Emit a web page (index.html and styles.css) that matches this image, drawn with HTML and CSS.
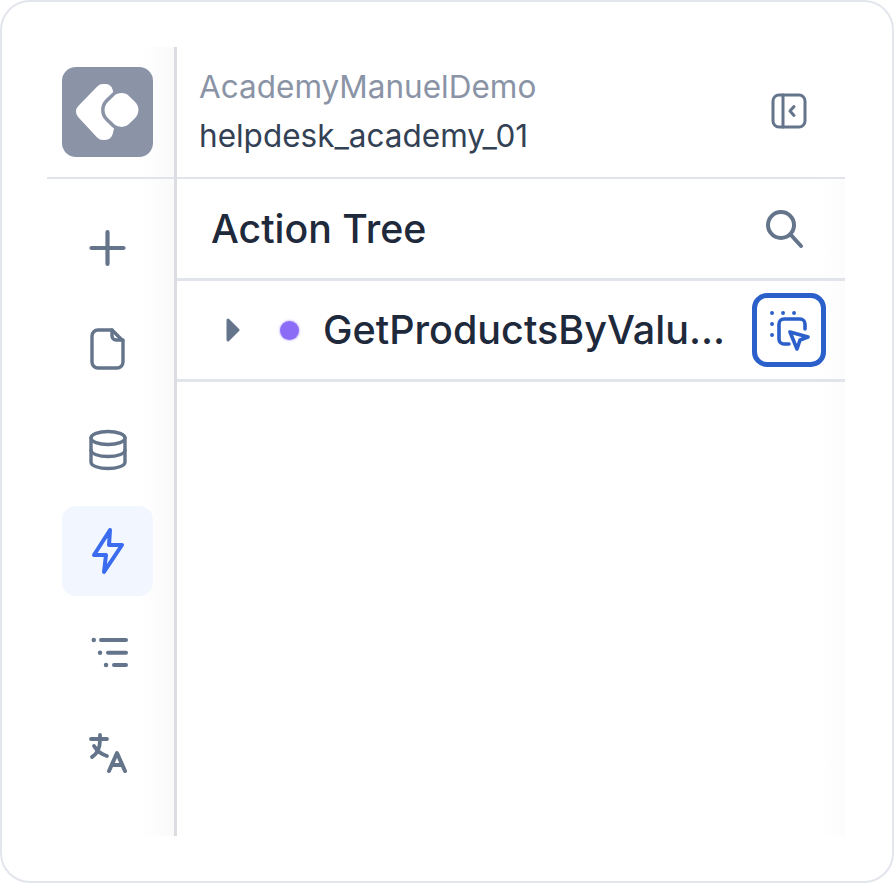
FILE: index.html
```html
<!doctype html>
<html lang="en">
  <head>
    <meta charset="UTF-8" />
    <meta name="viewport" content="width=device-width, initial-scale=1.0" />
    <title>Action Tree</title>
    <link rel="stylesheet" href="styles.css">
  </head>
  <body>
    <div class="card">
      <div class="panel">
        <aside class="rail">
          <div class="rail-top">
            <div class="logo">
              <svg width="91" height="90" viewBox="0 0 91 90">
                <path d="M22 44.500 L41 25 H43 L48 44 L43 65 H41 Z" fill="#fff" stroke="#fff" stroke-width="16" stroke-linejoin="round" />
                <rect x="42.500" y="26" width="34" height="34" rx="13" transform="rotate(45 59.500 43)" fill="#fff" stroke="#8a94a6" stroke-width="3.500" />
              </svg>
            </div>
          </div>
          <nav class="rail-nav">
            <a class="rail-item">
              <svg width="40" height="40" viewBox="0 0 40 40" class="icon">
                <path d="M19.500 4 V36 M3.500 20 H35.500" stroke-width="4.200" />
              </svg>
            </a>
            <a class="rail-item">
              <svg width="40" height="44" viewBox="0 0 40 44" class="icon">
                <path d="M24 3 H10 A6 6 0 0 0 4 9 V35 A6 6 0 0 0 10 41 H29 A6 6 0 0 0 35 35 V14 Z" stroke-width="3.400" />
                <path d="M24 3 V9 A4 4 0 0 0 28 13 H35" stroke-width="3.400" />
              </svg>
            </a>
            <a class="rail-item">
              <svg width="40" height="42" viewBox="0 0 40 42" class="icon">
                <ellipse cx="20" cy="9" rx="17" ry="6.500" stroke-width="3.400" />
                <path d="M3 9 V33 C3 37 11 39.500 20 39.500 C29 39.500 37 37 37 33 V9" stroke-width="3.400" />
                <path d="M3 21 C3 25 11 27.500 20 27.500 C29 27.500 37 25 37 21" stroke-width="3.400" />
              </svg>
            </a>
            <a class="rail-item active">
              <svg width="34" height="48" viewBox="0 0 34 48" class="icon">
                <path d="M19 3 L3 28 H15 L13 45 L31 18 H18 Z" stroke-width="4" />
              </svg>
            </a>
            <a class="rail-item">
              <svg width="40" height="34" viewBox="0 0 40 34" class="icon">
                <path d="M5.700 5 H5.800 M12 17.700 H12.100 M18 30 H18.100" stroke-width="4.400" />
                <path d="M13 5 H38 M20 17.700 H38 M26 30 H38" stroke-width="4" />
              </svg>
            </a>
            <a class="rail-item">
              <svg width="38" height="40" viewBox="0 0 38 40" class="icon">
                <path d="M2 6 H18 M11 2 V7 C11 15 8 21 3 24 M5 13 C8 18 12 21 18 23" stroke-width="3.800" />
                <path d="M20 38 L28 20 L36 38 M23 32 H33" stroke-width="4" />
              </svg>
            </a>
          </nav>
        </aside>
        <main class="content">
          <header class="app-head">
            <div class="app-names">
              <p class="app-org">AcademyManuelDemo</p>
              <p class="app-name">helpdesk_academy_01</p>
            </div>
            <svg width="36" height="36" viewBox="0 0 36 36" class="icon">
              <rect x="2" y="2" width="32" height="32" rx="6" stroke-width="3" />
              <path d="M12 2 V34" stroke-width="3" />
              <path d="M23 13.500 L19 18 L23 22.500" stroke-width="3" />
            </svg>
          </header>
          <div class="tree-head">
            <h2>Action Tree</h2>
            <svg width="40" height="40" viewBox="0 0 40 40" class="icon">
              <circle cx="17" cy="16" r="13" stroke-width="4" />
              <path d="M27 26 L37 37" stroke-width="4" />
            </svg>
          </div>
          <div class="tree-row">
            <svg width="14" height="24" viewBox="0 0 14 24" class="caret">
              <path d="M2 2 L12 12 L2 22 Z" />
            </svg>
            <span class="dot"></span>
            <span class="action-name">GetProductsByValu...</span>
            <button class="select-btn">
              <svg width="42" height="42" viewBox="0 0 42 42" class="icon-blue">
                <path d="M4 4 H4.100 M15 4 H15.100 M26 4 H26.100 M4 15 H4.100 M4 26 H4.100" stroke-width="3.800" />
                <path d="M21 35 H16 A5 5 0 0 1 11 30 V15 A5 5 0 0 1 16 10 H32 A5 5 0 0 1 37 15 V20" stroke-width="3.600" />
                <path d="M22 23 L40 28 L32 31 L29 40 Z" stroke-width="3.600" />
              </svg>
            </button>
          </div>
          <div class="tree-body"></div>
        </main>
      </div>
    </div>
  </body>
</html>
```

FILE: styles.css
```css
:root {
  --line: #e2e4ec;
  --icon: #64748b;
  --text-dark: #1e293b;
  --text-light: #8a94a6;
  --blue: #2b5fc9;
  --edge-fade: linear-gradient(to right, white 96%, #fcfcfc 100%);
}

* {
  box-sizing: border-box;
  margin: 0;
  padding: 0;
}

body {
  width: 894px;
  height: 883px;
  font-family: Inter, "Liberation Sans", sans-serif;
  background-color: white;
  overflow: hidden;
}

.card {
  width: 894px;
  height: 883px;
  padding: 45px 47px 45px 45px;
  background-color: white;
  border: 2px solid #e2e5ec;
  border-radius: 30px;
}

.panel {
  display: flex;
  height: 789px;
}

/* left rail */
.rail {
  width: 130px;
  flex-shrink: 0;
  border-right: 3px solid #dcdde3;
  background: linear-gradient(to right, white 72%, #fafafa 100%);
}

.rail-top {
  height: 132px;
  padding: 20px 0 0 15px;
  border-bottom: 2px solid var(--line);
}

.logo {
  width: 91px;
  height: 90px;
  border-radius: 14px;
  background-color: #8a94a6;
}

.logo svg {
  display: block;
}

.rail-nav {
  display: flex;
  flex-direction: column;
  gap: 11px;
  padding: 24px 0 0 15px;
}

.rail-item {
  display: flex;
  align-items: center;
  justify-content: center;
  width: 91px;
  height: 90px;
  border-radius: 14px;
}

.rail-item.active {
  background-color: #f2f6ff;
}

.rail-item.active .icon {
  stroke: #3b6cf0;
}

.icon,
.icon-blue {
  fill: none;
  stroke: var(--icon);
  stroke-linecap: round;
  stroke-linejoin: round;
  flex-shrink: 0;
}

.icon-blue {
  stroke: var(--blue);
}

/* right side */
.content {
  display: flex;
  flex-direction: column;
  flex: 1;
  min-width: 0;
}

.app-head {
  display: flex;
  align-items: center;
  justify-content: space-between;
  height: 132px;
  padding: 0 38px 3px 22px;
  border-bottom: 2px solid var(--line);
}

.app-org {
  font-size: 31.500px;
  line-height: 49px;
  color: var(--text-light);
}

.app-name {
  font-size: 31.500px;
  line-height: 49px;
  color: #334155;
}

.tree-head {
  display: flex;
  align-items: center;
  justify-content: space-between;
  height: 102px;
  padding: 0 41px 0 34px;
  border-bottom: 3px solid var(--line);
  background: var(--edge-fade);
}

.tree-head h2 {
  font-size: 39.300px;
  font-weight: 500;
  color: var(--text-dark);
}

.tree-row {
  display: flex;
  align-items: center;
  height: 101px;
  padding: 0 19px 0 49px;
  border-bottom: 3px solid var(--line);
  background: var(--edge-fade);
}

.caret {
  flex-shrink: 0;
  fill: var(--icon);
  stroke: var(--icon);
  stroke-width: 3;
  stroke-linejoin: round;
  margin-right: 40px;
}

.dot {
  width: 19px;
  height: 19px;
  flex-shrink: 0;
  border-radius: 50%;
  background-color: #8b6cf6;
  box-shadow: 0 0 2px 1px #d3c8fb;
  margin-right: 24px;
}

.action-name {
  font-size: 39.500px;
  font-weight: 500;
  color: var(--text-dark);
  white-space: nowrap;
}

.select-btn {
  display: flex;
  align-items: center;
  justify-content: center;
  width: 74px;
  height: 74px;
  margin-left: auto;
  flex-shrink: 0;
  background-color: white;
  border: 5px solid var(--blue);
  border-radius: 15px;
}

.tree-body {
  flex: 1;
  background: var(--edge-fade);
}
```
